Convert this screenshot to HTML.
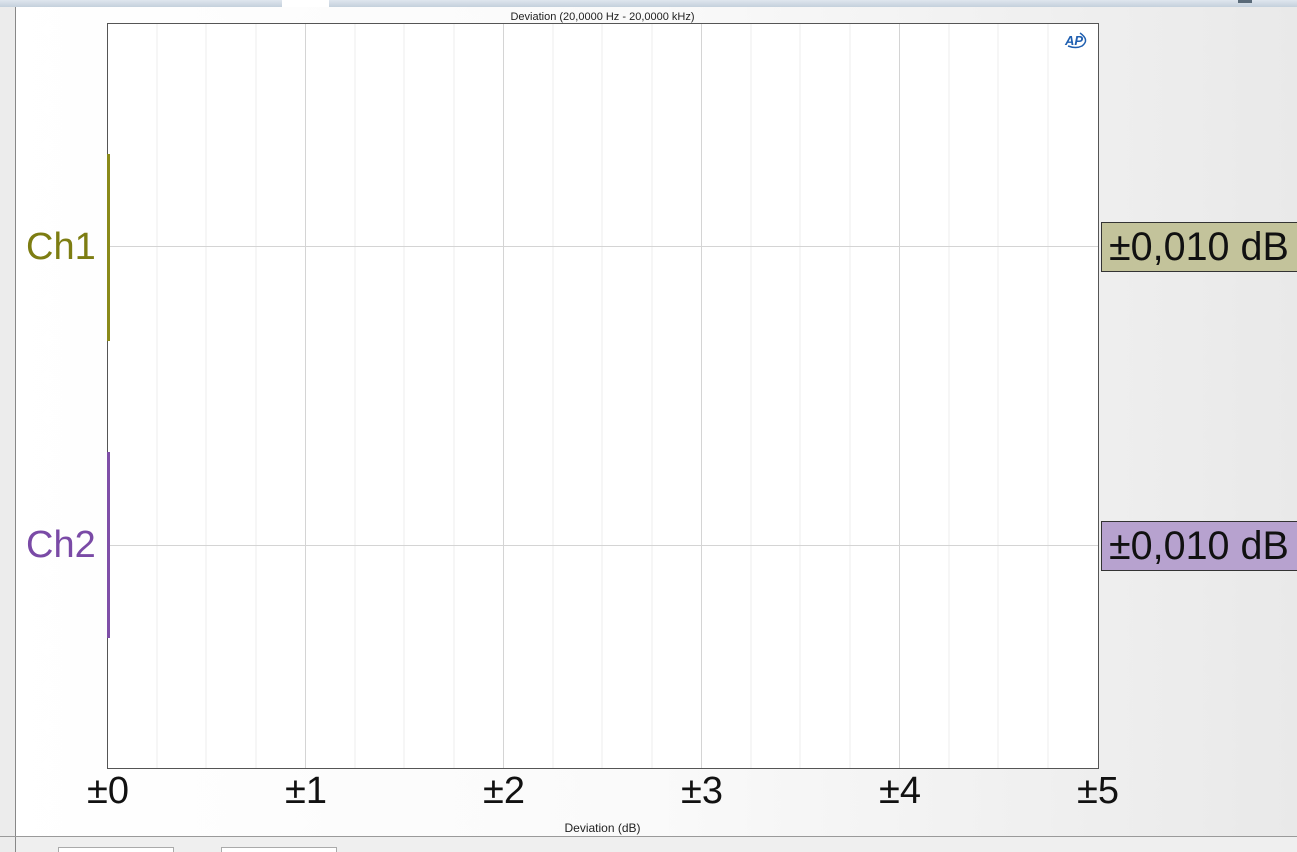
<!DOCTYPE html>
<html><head><meta charset="utf-8"><style>
html,body{margin:0;padding:0}
body{width:1297px;height:852px;position:relative;overflow:hidden;font-family:"Liberation Sans",Arial,sans-serif;background:linear-gradient(90deg,#ffffff 0%,#fafafa 50%,#e9e9e9 100%)}
.a{position:absolute}
.val{position:absolute;left:1101px;width:210px;height:50px;border:1px solid #333;font-size:39.5px;line-height:49px;padding-left:7px;color:#111;box-sizing:border-box}
.tick{position:absolute;top:770px;font-size:38px;color:#111;transform:translateX(-50%)}
</style></head><body>
<div class="a" style="left:0;top:0;width:1297px;height:7px;background:linear-gradient(#dfe6ee,#c4d0dc)"></div>
<div class="a" style="left:282px;top:0;width:47px;height:7px;background:#fff"></div>
<div class="a" style="left:1238px;top:0;width:14px;height:3px;background:#5a6a78"></div>
<div class="a" style="left:0;top:7px;width:15px;height:845px;background:#ececec;border-right:1px solid #888"></div>
<div class="a" style="left:0;top:11px;width:1205px;text-align:center;font-size:11px;color:#222">Deviation (20,0000 Hz - 20,0000 kHz)</div>
<svg class="a" style="left:0;top:0" width="1297" height="852">
<rect x="107.5" y="23.5" width="991" height="745" fill="#fff" stroke="#555" stroke-width="1"/>
<g stroke="#ececec" stroke-width="1">
<line x1="157" y1="24" x2="157" y2="768"/><line x1="206" y1="24" x2="206" y2="768"/><line x1="256" y1="24" x2="256" y2="768"/>
<line x1="355" y1="24" x2="355" y2="768"/><line x1="404" y1="24" x2="404" y2="768"/><line x1="454" y1="24" x2="454" y2="768"/>
<line x1="553" y1="24" x2="553" y2="768"/><line x1="602" y1="24" x2="602" y2="768"/><line x1="652" y1="24" x2="652" y2="768"/>
<line x1="751" y1="24" x2="751" y2="768"/><line x1="800" y1="24" x2="800" y2="768"/><line x1="850" y1="24" x2="850" y2="768"/>
<line x1="949" y1="24" x2="949" y2="768"/><line x1="998" y1="24" x2="998" y2="768"/><line x1="1048" y1="24" x2="1048" y2="768"/>
</g>
<g stroke="#d4d4d4" stroke-width="1">
<line x1="305.5" y1="24" x2="305.5" y2="768"/><line x1="503.5" y1="24" x2="503.5" y2="768"/><line x1="701.5" y1="24" x2="701.5" y2="768"/><line x1="899.5" y1="24" x2="899.5" y2="768"/>
<line x1="108" y1="246.5" x2="1098" y2="246.5"/><line x1="108" y1="545.5" x2="1098" y2="545.5"/>
</g>
<rect x="107.5" y="23.5" width="991" height="745" fill="none" stroke="#555" stroke-width="1"/>
<rect x="107" y="154" width="3" height="187" fill="#8a8a1a"/>
<rect x="107" y="452" width="3" height="186" fill="#7f4fa8"/>
<line x1="0" y1="836.5" x2="1297" y2="836.5" stroke="#9a9a9a"/>
<rect x="16" y="837" width="1281" height="15" fill="#efefef"/>
<rect x="58.5" y="847.5" width="115" height="8" fill="#fff" stroke="#aaa"/>
<rect x="221.5" y="847.5" width="115" height="8" fill="#fff" stroke="#aaa"/>
<text x="1074" y="45" font-family="Liberation Sans" font-style="italic" font-weight="bold" font-size="13" fill="#1f5fb0" text-anchor="middle">AP</text>
<path d="M1080 33 Q1090 40 1082 46 Q1076 49 1068 46" fill="none" stroke="#1f5fb0" stroke-width="1.5"/>
</svg>
<div class="a" style="left:26px;top:226px;font-size:38px;color:#7d7d12">Ch1</div>
<div class="a" style="left:26px;top:524px;font-size:38px;color:#7a4aa6">Ch2</div>
<div class="val" style="top:222px;background:#c3c39b">±0,010 dB</div>
<div class="val" style="top:521px;background:#b7a2cf">±0,010 dB</div>
<div class="tick" style="left:108px">±0</div>
<div class="tick" style="left:306px">±1</div>
<div class="tick" style="left:504px">±2</div>
<div class="tick" style="left:702px">±3</div>
<div class="tick" style="left:900px">±4</div>
<div class="tick" style="left:1098px">±5</div>
<div class="a" style="left:0;top:821px;width:1205px;text-align:center;font-size:12px;color:#222">Deviation (dB)</div>
</body></html>
